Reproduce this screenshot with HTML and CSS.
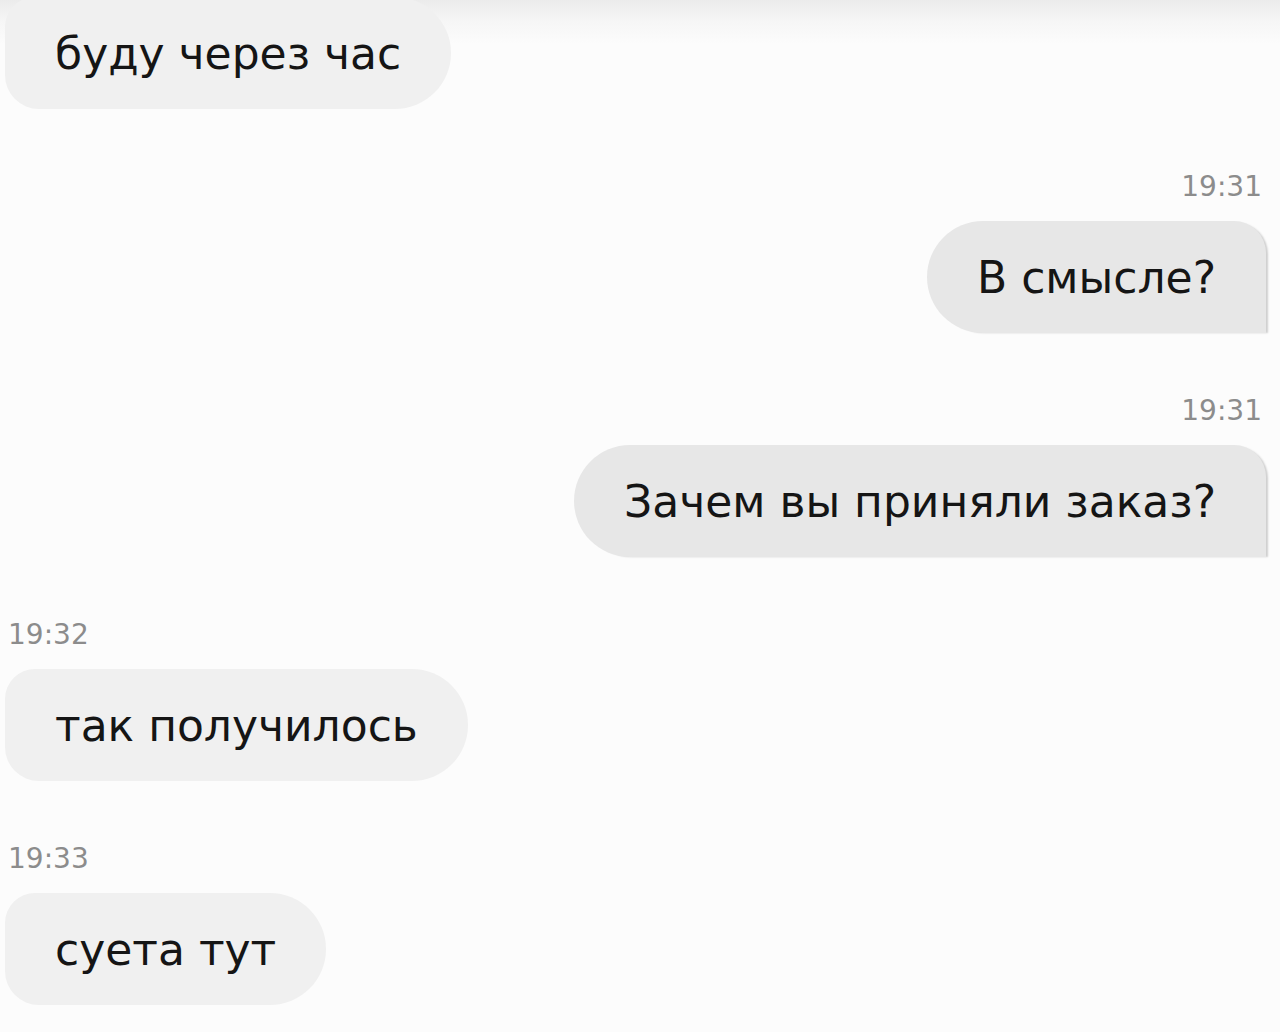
FILE: index.html
```html
<!DOCTYPE html>
<html lang="ru">
<head>
    <meta charset="UTF-8">
    <meta name="viewport" content="width=device-width, initial-scale=1.0">
    <title>Чат</title>
    <link rel="stylesheet" href="styles.css">
</head>
<body>
    <div class="chat">
        <!-- Входящее -->
        <div class="msg in first">
            <div class="bubble">буду через час</div>
        </div>

        <!-- Исходящие -->
        <div class="msg out">
            <div class="time">19:31</div>
            <div class="bubble">В смысле?</div>
        </div>
        <div class="msg out">
            <div class="time">19:31</div>
            <div class="bubble">Зачем вы приняли заказ?</div>
        </div>

        <div class="msg in">
            <div class="time">19:32</div>
            <div class="bubble">так получилось</div>
        </div>
        <div class="msg in">
            <div class="time">19:33</div>
            <div class="bubble">суета тут</div>
        </div>
    </div>
</body>
</html>
```

FILE: styles.css
```css
/* Сброс */
* {
    margin: 0;
    padding: 0;
    box-sizing: border-box;
}

body {
    font-family: "DejaVu Sans", "Open Sans", sans-serif;
    background: linear-gradient(to bottom, #ebebeb 0, #f6f6f6 22px, #fcfcfc 44px);
    color: #151515;
    height: 100vh;
    overflow: hidden;
}

/* Лента сообщений */
.chat {
    display: flex;
    flex-direction: column;
    padding: 0 14px 0 5px;
}

.msg {
    display: flex;
    flex-direction: column;
    margin-top: 58px;
}

.msg.first {
    margin-top: -3px;
}

.msg.in {
    align-items: flex-start;
}

.msg.out {
    align-items: flex-end;
}

/* Время */
.time {
    font-size: 28px;
    line-height: 40px;
    height: 40px;
    color: #8c8c8c;
    margin-bottom: 14px;
}

.msg.in .time {
    padding-left: 3px;
}

.msg.out .time {
    padding-right: 4px;
}

/* Пузыри */
.bubble {
    height: 112px;
    padding: 0 50px;
    display: flex;
    align-items: center;
    font-size: 44px;
    white-space: nowrap;
}

.msg.in .bubble {
    background-color: #f0f0f0;
    border-radius: 30px 56px 56px 34px;
}

.msg.out .bubble {
    background-color: #e7e7e7;
    border-radius: 56px 32px 0 56px;
    box-shadow: 3px 1px 2px -1px rgba(0, 0, 0, 0.18);
}
```
